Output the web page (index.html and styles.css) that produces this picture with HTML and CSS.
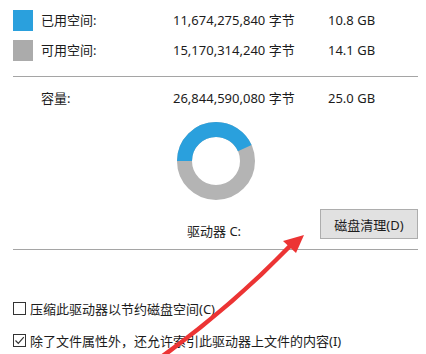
FILE: index.html
```html
<!DOCTYPE html>
<html lang="zh-CN">
<head>
<meta charset="utf-8">
<title>驱动器属性</title>
<link rel="stylesheet" href="styles.css">
</head>
<body>
<div class="page">
  <div class="stats">
    <div class="row">
      <span class="swatch used"></span>
      <span class="label">已用空间:</span>
      <span class="bytes">11,674,275,840 字节</span>
      <span class="gb">10.8 GB</span>
    </div>
    <div class="row">
      <span class="swatch free"></span>
      <span class="label">可用空间:</span>
      <span class="bytes">15,170,314,240 字节</span>
      <span class="gb">14.1 GB</span>
    </div>
  </div>
  <div class="sep first"></div>
  <div class="stats">
    <div class="row">
      <span></span>
      <span class="label">容量:</span>
      <span class="bytes">26,844,590,080 字节</span>
      <span class="gb">25.0 GB</span>
    </div>
  </div>
  <div class="donut-wrap">
    <svg class="donut" width="82" height="82" viewBox="0 0 82 82">
      <circle cx="41" cy="41" r="31.5" fill="none" stroke="#b4b4b4" stroke-width="15"/>
      <circle cx="41" cy="41" r="31.5" fill="none" stroke="#2aa0dd" stroke-width="15"
        stroke-dasharray="85.5 200" transform="rotate(180 41 41)"/>
    </svg>
  </div>
  <div class="drive-row">
    <span class="drive-label">驱动器 C:</span>
    <button class="clean-btn">磁盘清理(D)</button>
  </div>
  <div class="sep second"></div>
  <div class="checks">
    <label class="check">
      <span class="box"></span>
      <span>压缩此驱动器以节约磁盘空间(C)</span>
    </label>
    <label class="check">
      <span class="box">
        <svg width="11" height="11" viewBox="0 0 11 11"><path d="M1.5 5.5 L4.3 8.3 L9.8 2.2" fill="none" stroke="#333" stroke-width="1.2"/></svg>
      </span>
      <span>除了文件属性外，还允许索引此驱动器上文件的内容(I)</span>
    </label>
  </div>
</div>
<svg class="arrow" width="426" height="354" viewBox="0 0 426 354">
  <path d="M160 358 Q231 307 290 246" fill="none" stroke="#ec3434" stroke-width="4.6"/>
  <polygon points="304,235 283,241 296,253" fill="#ec3434"/>
</svg>
</body>
</html>
```

FILE: styles.css
```css
html, body {
  margin: 0;
  padding: 0;
  background: #ffffff;
}
body {
  width: 426px;
  height: 354px;
  overflow: hidden;
  position: relative;
  font-family: "Noto Sans", "Noto Sans CJK SC", sans-serif;
  font-size: 13px;
  color: #1c1c1c;
}
.page {
  padding: 5px 8px 0 13px;
}
.stats .row {
  display: grid;
  grid-template-columns: 28px 132px 155px 1fr;
  align-items: center;
  height: 30px;
}
.swatch {
  width: 20px;
  height: 21px;
  display: block;
}
.swatch.used { background: #2aa0dd; }
.swatch.free { background: #ababab; }
.label, .bytes, .gb {
  line-height: 16px;
  white-space: nowrap;
}
.sep {
  border-top: 1px solid #a5a5a5;
}
.sep.first {
  margin-top: 11px;
  margin-bottom: 6px;
}
.donut-wrap {
  margin-top: 7px;
  padding-left: 162px;
  height: 82px;
}
.donut {
  display: block;
}
.drive-row {
  display: flex;
  align-items: flex-end;
  margin-top: 7px;
}
.drive-label {
  margin-left: 174px;
  line-height: 16px;
  white-space: nowrap;
}
.clean-btn {
  margin-left: auto;
  width: 98px;
  height: 30px;
  background: #e1e1e1;
  border: 1px solid #adadad;
  font-family: inherit;
  font-size: 13px;
  color: #1c1c1c;
  padding: 0;
}
.sep.second {
  margin-top: 10px;
}
.checks {
  margin-top: 48px;
  display: flex;
  flex-direction: column;
  gap: 12px;
}
.check {
  display: flex;
  align-items: center;
  height: 20px;
  gap: 4px;
  white-space: nowrap;
}
.box {
  width: 11px;
  height: 11px;
  border: 1px solid #333333;
  background: #ffffff;
  display: flex;
  align-items: center;
  justify-content: center;
  flex: none;
}
.box svg {
  display: block;
}
.arrow {
  position: absolute;
  left: 0;
  top: 0;
  pointer-events: none;
}
```
